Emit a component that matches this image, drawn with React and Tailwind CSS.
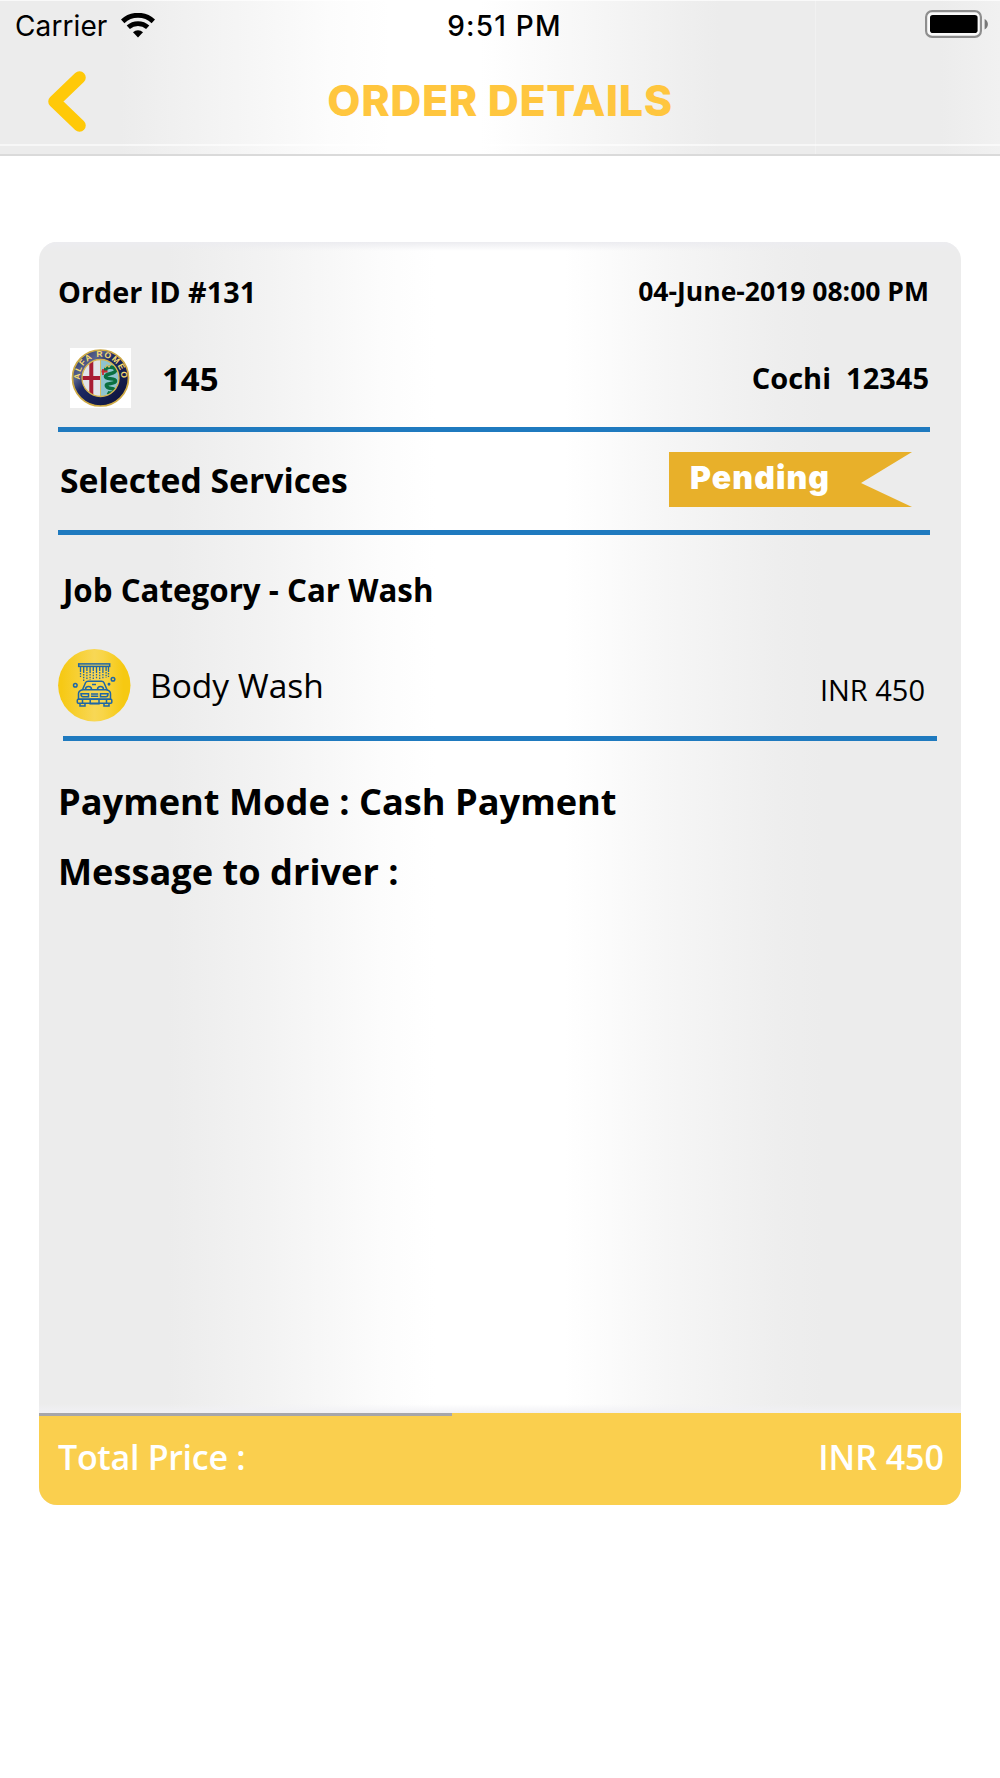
import { useId } from 'react'

const order = {
  id: '131',
  date: '04-June-2019 08:00 PM',
  model: '145',
  place: 'Cochi',
  plate: '12345',
  status: 'Pending',
  category: 'Car Wash',
  service: 'Body Wash',
  price: 'INR 450',
  payment: 'Cash Payment',
  message: '',
}

const ruleClass = 'h-[5px] shrink-0 bg-[#1f7abf]'

function WifiIcon() {
  return (
    <svg width="34" height="25" viewBox="0 0 34 25" fill="none" className="shrink-0">
      <path d="M1.700 8.300a22.500 22.500 0 0 1 30.600 0" stroke="#000" strokeWidth="5" />
      <path d="M7.300 14.300a14.500 14.500 0 0 1 19.400 0" stroke="#000" strokeWidth="4.800" />
      <path d="M17 24.600l-5-5.300a7.200 7.200 0 0 1 10 0z" fill="#000" />
    </svg>
  )
}

function BatteryIcon() {
  return (
    <svg width="64" height="28" viewBox="0 0 64 28" className="shrink-0">
      <rect x="1.1" y="1.1" width="54.8" height="25.8" rx="6" fill="#fafafa" stroke="#8e8e8e" strokeWidth="2.2" />
      <rect x="5" y="5" width="47.6" height="18" rx="2.8" fill="#000" />
      <path d="M59.600 9c4.400 2 4.400 8.400 0 10.400z" fill="#777" />
    </svg>
  )
}

function BackIcon() {
  return (
    <svg width="38" height="61" viewBox="0 0 38 61" fill="none">
      <path d="M31.500 6.500 6.500 30.500l25 24" stroke="#ffc908" strokeWidth="12.500" strokeLinecap="round" strokeLinejoin="round" />
    </svg>
  )
}

function AlfaRomeoBadge() {
  const id = useId()
  return (
    <svg width="61" height="60" viewBox="0 0 61 60" className="shrink-0 bg-white">
      <defs>
        <linearGradient id={`${id}ring`} x1="0" y1="0" x2="1" y2="1">
          <stop offset="0" stopColor="#1a2459" />
          <stop offset="0.28" stopColor="#59658f" />
          <stop offset="0.42" stopColor="#1d2862" />
          <stop offset="1" stopColor="#0b1036" />
        </linearGradient>
        <clipPath id={`${id}clip`}>
          <circle cx="30.500" cy="30" r="18.500" />
        </clipPath>
        <path id={`${id}arc`} d="M10 32.500A20.700 20.700 0 1 1 51 32.500" />
      </defs>
      <circle cx="30.500" cy="30" r="28" fill={`url(#${id}ring)`} stroke="#cda945" strokeWidth="1.700" />
      <g clipPath={`url(#${id}clip)`}>
        <rect x="11" y="11" width="19.500" height="38" fill="#e2e4ea" />
        <rect x="30.500" y="11" width="20" height="38" fill="#8fc4cf" />
        <path d="M21.300 11v38M11 30h19" stroke="#a81c34" strokeWidth="4" />
        <path
          d="M36 23.500c-3-5 9-6 9.500-1.500s-10 3-10 6.500 10 1 10 4.500-10 1.500-9 5 8.500 1.500 8 4.500-5 3-7 2"
          fill="none"
          stroke="#0b7040"
          strokeWidth="3.600"
        />
        <path d="M33 21v6M31.500 23.500h6" stroke="#c92b35" strokeWidth="1.800" />
        <path d="M35 20l2-3 2 2 2-3" fill="none" stroke="#d5bd63" strokeWidth="1.300" />
        <path d="M30.500 11v38" stroke="#d6bd61" strokeWidth="1" />
      </g>
      <circle cx="30.500" cy="30" r="18.500" fill="none" stroke="#d6b451" strokeWidth="1.300" />
      <text className="fill-[#f7dc70] font-['Liberation_Sans'] text-[8.5px] font-bold">
        <textPath href={`#${id}arc`} startOffset="1" textLength="67">
          ALFA ROMEO
        </textPath>
      </text>
    </svg>
  )
}

function CarWashIcon() {
  const id = useId()
  return (
    <svg width="73" height="73" viewBox="0 0 73 73" fill="none" className="shrink-0">
      <defs>
        <linearGradient id={id}>
          <stop offset="0.05" stopColor="#f6c915" />
          <stop offset="0.5" stopColor="#f8d755" />
          <stop offset="0.62" stopColor="#f8d548" />
          <stop offset="0.9" stopColor="#f6c912" />
        </linearGradient>
      </defs>
      <circle cx="36.300" cy="36.300" r="36.200" fill={`url(#${id})`} />
      <g stroke="#1f66a5" strokeWidth="1.500">
        <rect x="20.700" y="14.900" width="31" height="2.500" />
        <path d="M22.500 17v6M25.700 17v7M28.900 17v5M32.100 17v7M35.300 17v5M38.500 17v7M41.700 17v5M44.900 17v7M48.100 17v5M50.500 17v6" strokeWidth="1.300" />
        <path
          d="M22.500 24v4M25.700 25v7M28.900 23v7M32.100 25v6M35.300 23v8M38.500 25v5M41.700 23v8M44.900 25v5M48.100 23v6M50.500 24v4"
          strokeWidth="1.300"
          strokeDasharray="1.500 1.300"
        />
        <circle cx="17.300" cy="36.300" r="1.800" />
        <circle cx="55" cy="30.300" r="1.800" />
        <circle cx="51" cy="35.200" r="0.700" />
        <path d="M24.500 40.800l3-7q.7-1.500 2.500-1.500h13.500q1.800 0 2.500 1.500l3 7z" />
        <path d="M34 35.500h4M27.500 40.500q0-3 3-3t3 3M39.500 40.500q0-3 3-3t3 3" />
        <path d="M24.500 40.800q-4 1-4 4v5.500h32v-5.500q0-3-4-4" />
        <path d="M23 44.700h7.500v3H25q-2 0-2-3zM50 44.700h-7.500v3H48q2 0 2-3zM33 44.900h7.200M33 47.300h7.200" />
        <rect x="19.300" y="50.300" width="34.500" height="4" rx="1" />
        <rect x="32.200" y="50.300" width="8.800" height="4.500" />
        <path d="M22 54.500v2.500h5v-2.500M46 54.500v2.500h5v-2.500M24.500 50.500v3.500M48.500 50.500v3.500" />
      </g>
    </svg>
  )
}

function Header() {
  return (
    <header className="relative h-[156px] border-b-2 border-[#dadada] bg-[linear-gradient(90deg,#ececec_0%,#ececec_12%,#f3f3f3_21%,#fcfcfc_33%,#fff_39%,#fff_48%,#f8f8f8_57%,#efefef_68%,#ececec_72%,#ececec_94%,#f1f1f1_100%)] font-['Inter',sans-serif]">
      <div className="absolute inset-x-0 top-0 h-px bg-white/70" />
      <div className="absolute inset-x-0 top-[144px] h-[2px] bg-white/60" />
      <div className="absolute inset-y-0 left-[815px] w-px bg-white/25" />
      <div className="grid h-[51px] grid-cols-3 items-center pl-[15px] pr-[11px] text-[28px] leading-none text-black">
        <div className="flex items-center gap-[14px]">
          <span className="tracking-[0.1px]">Carrier</span>
          <WifiIcon />
        </div>
        <span className="pl-[5px] text-center font-medium tracking-[1.2px]">9:51 PM</span>
        <div className="flex justify-end pb-[3px]">
          <BatteryIcon />
        </div>
      </div>
      <div className="grid h-[101px] grid-cols-[48px_1fr_48px] items-center px-[48px]">
        <button type="button" aria-label="Back">
          <BackIcon />
        </button>
        <h1 className="whitespace-nowrap pb-[2px] text-center text-[43px] font-extrabold leading-none tracking-[0.6px] text-[#ffc63e]">
          ORDER DETAILS
        </h1>
      </div>
    </header>
  )
}

function StatusRibbon({ children }) {
  return (
    <div className="mb-[3px] mr-[18px] h-[55px] w-[243px] bg-[#e8b02a] pl-[21px] font-['Inter',sans-serif] text-[32px] font-black leading-[51px] tracking-[1.1px] text-white [clip-path:polygon(0_0,100%_0,192px_31px,100%_100%,0_100%)]">
      {children}
    </div>
  )
}

export default function App() {
  return (
    <main className="min-h-[1778px] w-[1000px] bg-white font-['Open_Sans',sans-serif] text-black">
      <Header />

      <section className="mx-[39px] mt-[86px] flex h-[1263px] flex-col overflow-hidden rounded-[18px] bg-[linear-gradient(90deg,#ececec_0%,#ececec_14%,#f3f3f3_25%,#fcfcfc_37%,#fff_43%,#fff_57%,#f6f6f6_68%,#eee_80%,#ececec_85%,#ececec_100%)]">
        <div className="flex grow flex-col bg-[linear-gradient(180deg,#ececf0_0px,#ececf000_9px,#ececf000_calc(100%-9px),#f1f1f5_100%)] pl-[19px] pr-[31px] leading-none">
          <div className="flex h-[98px] shrink-0 items-center justify-between">
            <h2 className="pt-[2px] text-[28.8px] font-bold">Order ID #{order.id}</h2>
            <p className="pr-px text-[26.5px] font-bold">{order.date}</p>
          </div>
          <div className="mb-[11px] flex h-[76px] shrink-0 items-center pl-[12px]">
            <AlfaRomeoBadge />
            <span className="ml-[31px] text-[33px] font-bold">{order.model}</span>
            <span className="ml-auto whitespace-pre pb-[2px] pr-px text-[29px] font-bold">
              {order.place}  {order.plate}
            </span>
          </div>
          <div className={ruleClass} />

          <div className="flex h-[98px] shrink-0 items-center justify-between pl-[2px]">
            <h3 className="text-[33.7px] font-bold">Selected Services</h3>
            <StatusRibbon>{order.status}</StatusRibbon>
          </div>
          <div className={ruleClass} />

          <h3 className="flex h-[110px] shrink-0 items-center pl-[5px] pt-px text-[31.3px] font-bold">
            Job Category - {order.category}
          </h3>
          <div className="mb-[11px] flex h-[80px] shrink-0 items-center">
            <CarWashIcon />
            <span className="ml-[19px] pt-[2px] text-[33.5px]">{order.service}</span>
            <span className="ml-auto mr-[5px] mt-[9px] text-[29px]">{order.price}</span>
          </div>
          <div className={`${ruleClass} -mr-[7px] ml-[5px]`} />

          <div className="mt-[25px] text-[36.2px] font-bold">
            <p className="flex h-[70px] items-center">Payment Mode : {order.payment}</p>
            <p className="flex h-[70px] items-center">Message to driver : {order.message}</p>
          </div>
        </div>

        <footer className="h-[92px] shrink-0 bg-[#facf4e]">
          <div className="h-[3px] w-[413px] bg-[#a6a6aa]" />
          <div className="flex h-[82px] items-center justify-between pl-[19px] pr-[17px] text-[34px] font-semibold leading-none text-white">
            <span className="tracking-[-0.3px]">Total Price :</span>
            <span>{order.price}</span>
          </div>
        </footer>
      </section>
    </main>
  )
}
